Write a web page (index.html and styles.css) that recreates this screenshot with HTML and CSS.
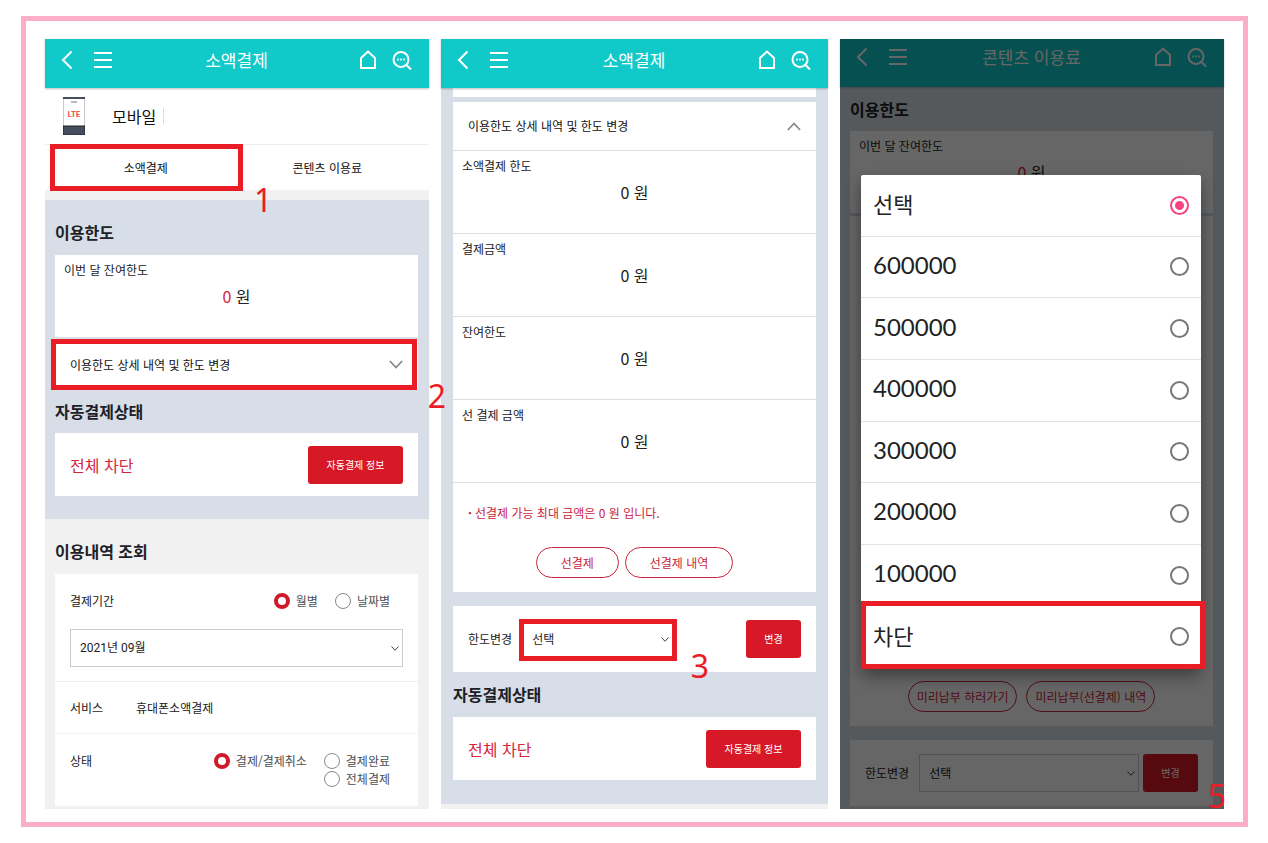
FILE: index.html
```
<!DOCTYPE html>
<html lang="ko">
	<head>
		<meta charset="utf-8">
		<meta name="viewport" content="width=device-width, initial-scale=1">
		<title>소액결제</title>
		<link rel="stylesheet" href="styles.css">
	</head>
	<body>
		<!-- shared icons -->
		<svg class="sprite" aria-hidden="true">
			<symbol id="back" viewBox="0 0 12 20">
				<path d="M10.500 1.500L2 10l8.500 8.500"/>
			</symbol>
			<symbol id="menu" viewBox="0 0 20 20">
				<path d="M1 3h18M1 10h18M1 17h18"/>
			</symbol>
			<symbol id="home" viewBox="0 0 18 20">
				<path d="M2 8l7-6.500L16 8v10H2z"/>
			</symbol>
			<symbol id="search" viewBox="0 0 20 20">
				<circle cx="9" cy="9.500" r="7.500"/>
				<path d="M14.500 15l4.500 4.500"/>
				<path d="M5.200 9.500h1.600M8.200 9.500h1.600M11.200 9.500h1.600"/>
			</symbol>
			<symbol id="down" viewBox="0 0 16 10">
				<path d="M1 1l7 7.500L15 1"/>
			</symbol>
			<symbol id="up" viewBox="0 0 16 10">
				<path d="M1 9l7-7.500L15 9"/>
			</symbol>
		</svg>

		<main class="board">
			<!-- step 1, 2 -->
			<section class="phone">
				<header class="topbar">
					<div class="tools">
						<button class="tool" aria-label="뒤로"><svg class="icon-back"><use href="#back"/></svg></button>
						<button class="tool" aria-label="메뉴"><svg class="icon-menu"><use href="#menu"/></svg></button>
					</div>
					<h1>소액결제</h1>
					<div class="tools right">
						<button class="tool" aria-label="홈"><svg class="icon-home"><use href="#home"/></svg></button>
						<button class="tool" aria-label="검색"><svg class="icon-search"><use href="#search"/></svg></button>
					</div>
				</header>
				<div class="product">
					<svg class="device" viewBox="0 0 22 38">
						<rect x="0.500" y="0.500" width="21" height="37" fill="#fff" stroke="#c8cace"/>
						<path d="M0 1h22" stroke="#454d5e" stroke-width="2"/>
						<path d="M8 5h6" stroke="#777"/>
						<rect y="29" width="22" height="9" fill="#454d5e"/>
						<text x="11" y="20" text-anchor="middle">LTE</text>
					</svg>
					<span class="product-name">모바일</span>
				</div>
				<nav class="tabs">
					<a class="tab mark mark-tab" href="#">소액결제<span class="step step-1">1</span></a>
					<a class="tab" href="#">콘텐츠 이용료</a>
				</nav>
				<div class="area">
					<h2 class="first">이용한도</h2>
					<div class="card amount">
						<span class="label">이번 달 잔여한도</span>
						<p><em>0</em> 원</p>
					</div>
					<button class="accordion closed mark mark-row">
						이용한도 상세 내역 및 한도 변경
						<svg><use href="#down"/></svg>
						<span class="step step-2">2</span>
					</button>
					<h2>자동결제상태</h2>
					<div class="card status">
						<strong>전체 차단</strong>
						<button class="btn wide">자동결제 정보</button>
					</div>
				</div>
				<form class="history">
					<h2 class="first">이용내역 조회</h2>
					<div class="card">
						<div class="period">
							<div class="field">
								<span>결제기간</span>
								<div class="radios">
									<label><input type="radio" name="period" checked>월별</label>
									<label><input type="radio" name="period">날짜별</label>
								</div>
							</div>
							<div class="select month">
								<select aria-label="결제기간"><option>2021년 09월</option></select>
								<svg><use href="#down"/></svg>
							</div>
						</div>
						<div class="service">
							<span>서비스</span>
							<span>휴대폰소액결제</span>
						</div>
						<div class="field state">
							<span>상태</span>
							<div class="radios">
								<label><input type="radio" name="state" checked>결제/결제취소</label>
								<label><input type="radio" name="state">결제완료</label>
								<label><input type="radio" name="state">전체결제</label>
							</div>
						</div>
					</div>
				</form>
			</section>

			<!-- step 3 -->
			<section class="phone detail">
				<header class="topbar">
					<div class="tools">
						<button class="tool" aria-label="뒤로"><svg class="icon-back"><use href="#back"/></svg></button>
						<button class="tool" aria-label="메뉴"><svg class="icon-menu"><use href="#menu"/></svg></button>
					</div>
					<h1>소액결제</h1>
					<div class="tools right">
						<button class="tool" aria-label="홈"><svg class="icon-home"><use href="#home"/></svg></button>
						<button class="tool" aria-label="검색"><svg class="icon-search"><use href="#search"/></svg></button>
					</div>
				</header>
				<div class="area">
					<div class="card scrolled"></div>
					<div class="card">
						<button class="accordion">
							이용한도 상세 내역 및 한도 변경
							<svg><use href="#up"/></svg>
						</button>
						<div class="amount line">
							<span class="label">소액결제 한도</span>
							<p>0 원</p>
						</div>
						<div class="amount line">
							<span class="label">결제금액</span>
							<p>0 원</p>
						</div>
						<div class="amount line">
							<span class="label">잔여한도</span>
							<p>0 원</p>
						</div>
						<div class="amount line">
							<span class="label">선 결제 금액</span>
							<p>0 원</p>
						</div>
						<div class="prepay line">
							<p class="note">선결제 가능 최대 금액은 0 원 입니다.</p>
							<div class="pills">
								<button class="pill">선결제</button>
								<button class="pill">선결제 내역</button>
							</div>
						</div>
					</div>
					<form class="card change">
						<label for="limit">한도변경</label>
						<div class="select short mark mark-select">
							<select id="limit"><option>선택</option></select>
							<svg><use href="#down"/></svg>
							<span class="step step-3">3</span>
						</div>
						<button class="btn" type="button">변경</button>
					</form>
					<h2>자동결제상태</h2>
					<div class="card status">
						<strong>전체 차단</strong>
						<button class="btn wide">자동결제 정보</button>
					</div>
				</div>
			</section>

			<!-- step 5 -->
			<section class="phone contents">
				<header class="topbar">
					<div class="tools">
						<button class="tool" aria-label="뒤로"><svg class="icon-back"><use href="#back"/></svg></button>
						<button class="tool" aria-label="메뉴"><svg class="icon-menu"><use href="#menu"/></svg></button>
					</div>
					<h1>콘텐츠 이용료</h1>
					<div class="tools right">
						<button class="tool" aria-label="홈"><svg class="icon-home"><use href="#home"/></svg></button>
						<button class="tool" aria-label="검색"><svg class="icon-search"><use href="#search"/></svg></button>
					</div>
				</header>
				<div class="area">
					<h2>이용한도</h2>
					<div class="card amount">
						<span class="label">이번 달 잔여한도</span>
						<p><em>0</em> 원</p>
					</div>
					<div class="card rest">
						<div class="pills">
							<button class="pill">미리납부 하러가기</button>
							<button class="pill">미리납부(선결제) 내역</button>
						</div>
					</div>
					<form class="card change">
						<label for="content-limit">한도변경</label>
						<div class="select">
							<select id="content-limit"><option>선택</option></select>
							<svg><use href="#down"/></svg>
						</div>
						<button class="btn" type="button">변경</button>
					</form>
				</div>
				<div class="dim"></div>
				<div class="picker" role="dialog" aria-label="한도변경">
					<label class="option">선택<input type="radio" name="limit" checked></label>
					<label class="option num">600000<input type="radio" name="limit"></label>
					<label class="option num">500000<input type="radio" name="limit"></label>
					<label class="option num">400000<input type="radio" name="limit"></label>
					<label class="option num">300000<input type="radio" name="limit"></label>
					<label class="option num">200000<input type="radio" name="limit"></label>
					<label class="option num">100000<input type="radio" name="limit"></label>
					<label class="option mark mark-option">차단<input type="radio" name="limit"></label>
				</div>
				<span class="step step-5">5</span>
			</section>
		</main>
	</body>
</html>
```

FILE: styles.css
```
* {
	box-sizing: border-box;
}
body {
	margin: 0;
	padding: 16px 20px 16px 21px;
	background: #fff;
	color: #222;
	font-family: "Noto Sans CJK KR", sans-serif;
	font-size: 12px;
	line-height: 18px;
}
h1,
h2,
p {
	margin: 0;
}
button,
select {
	font: inherit;
	color: inherit;
}
button {
	padding: 0;
	border: none;
	background: none;
	cursor: pointer;
}
svg {
	display: block;
	fill: none;
	stroke: currentColor;
}
.sprite {
	display: none;
}
.board {
	display: grid;
	grid-template-columns: 384fr 387fr 384fr;
	gap: 12px;
	padding: 18px 19px 13px;
	border: 5px solid #fbaec8;
}
.phone {
	position: relative;
	display: flex;
	flex-direction: column;
	background: #f1f1f1;
}

/* top bar */
.topbar {
	position: relative;
	display: grid;
	grid-template-columns: 1fr auto 1fr;
	align-items: center;
	height: 49px;
	padding: 0 17px 8px 16px;
	background: #12c9ca;
	box-shadow: 0 1px 2px rgba(0, 0, 0, 0.25);
	color: #fff;
}
.topbar h1 {
	font-size: 17px;
	font-weight: 400;
	line-height: 24px;
}
.tools {
	display: flex;
	align-items: center;
	gap: 20px;
}
.right {
	justify-content: flex-end;
	gap: 15px;
}
.tool svg {
	height: 20px;
	stroke-width: 2;
}
.icon-back {
	width: 12px;
}
.icon-menu,
.icon-search {
	width: 20px;
}
.icon-home {
	width: 18px;
}

/* product and tabs */
.product {
	display: flex;
	align-items: center;
	gap: 27px;
	height: 56px;
	padding: 0 18px;
	background: #fff;
}
.device {
	width: 22px;
	height: 38px;
}
.device text {
	fill: #e8474f;
	stroke: none;
	font: bold 8px Lato, sans-serif;
}
.product-name {
	padding-right: 7px;
	border-right: 1px solid #ddd;
	color: #111;
	font-size: 16px;
	line-height: 16px;
}
.tabs {
	display: grid;
	grid-template-columns: 1fr 1fr;
	padding: 0 11px 0 10px;
	border-top: 1px solid #eee;
	background: #fff;
}
.tab {
	color: #111;
	line-height: 45px;
	text-align: center;
	text-decoration: none;
}

/* sections */
.area {
	margin-top: 10px;
	padding: 0 11px 23px 10px;
	background: #d8dee7;
}
h2 {
	height: 44px;
	color: #1d2026;
	font-size: 16px;
	font-weight: 700;
	line-height: 44px;
}
.first {
	height: 55px;
	padding-top: 10px;
}
.card {
	background: #fff;
}
.amount {
	height: 82px;
	padding: 6px 9px;
}
.amount p {
	margin-top: 5px;
	font-size: 16px;
	line-height: 24px;
	text-align: center;
}
.amount em {
	color: #d5263b;
	font-style: normal;
}
.line {
	border-top: 1px solid #dcdfe2;
}
.line.amount {
	height: 83px;
}
.accordion {
	display: flex;
	align-items: center;
	justify-content: space-between;
	width: 100%;
	height: 48px;
	padding: 0 15px;
	background: #fff;
	color: #111;
}
.closed {
	height: 49px;
	margin-top: 3px;
}
.accordion svg {
	width: 14px;
	height: 9px;
	stroke: #888;
	stroke-width: 2;
}
.status {
	display: flex;
	align-items: center;
	justify-content: space-between;
	height: 63px;
	padding: 0 15px;
}
.status strong {
	color: #d5263b;
	font-size: 16px;
	font-weight: 400;
}
.btn {
	width: 55px;
	height: 38px;
	border-radius: 3px;
	background: #d71826;
	color: #fff;
	font-size: 10px;
}
.wide {
	width: 95px;
}

/* history form */
.history {
	padding: 0 11px 3px 10px;
}
.period {
	padding: 18px 15px 14px;
}
.field {
	display: flex;
	justify-content: space-between;
}
.radios {
	display: flex;
	flex-wrap: wrap;
	justify-content: flex-end;
	column-gap: 17px;
	padding-right: 13px;
	color: #4d4f55;
}
.radios label {
	display: flex;
	align-items: center;
	gap: 6px;
}
.radios input {
	appearance: none;
	width: 16px;
	height: 16px;
	margin: 0;
	border: 1px solid #888;
	border-radius: 50%;
	background: #fff;
}
.radios input:checked {
	border: 4px solid #d01a2b;
}
.select {
	position: relative;
	flex: 1;
}
.select select {
	display: block;
	appearance: none;
	width: 100%;
	height: 38px;
	padding: 0 9px;
	border: 1px solid #ccc;
	border-radius: 0;
	background: #fff;
}
.select svg {
	position: absolute;
	top: 17px;
	right: 4px;
	width: 8px;
	height: 5px;
	stroke: #444;
	stroke-width: 2;
	pointer-events: none;
}
.month {
	margin-top: 19px;
}
.month select {
	font-family: Roboto, "Noto Sans CJK KR", sans-serif;
}
.service {
	display: grid;
	grid-template-columns: 66px 1fr;
	align-items: center;
	height: 52px;
	padding: 0 15px;
	border-top: 1px solid #eee;
}
.state {
	height: 73px;
	padding: 18px 15px 0;
	border-top: 1px solid #f3f3f3;
}
.state .radios {
	flex: 0 0 220px;
	align-content: flex-start;
}

/* second phone */
.detail .area {
	margin: 0;
	padding: 0 12px 24px;
}
.detail h2 {
	height: 45px;
}
.scrolled {
	height: 9px;
	margin-bottom: 5px;
}
.prepay {
	padding: 21px 0 14px;
}
.note {
	padding-left: 15px;
	color: #c8233c;
}
.note::before {
	content: "·";
	padding-right: 3px;
	font-weight: 700;
}
.pills {
	display: flex;
	justify-content: center;
	gap: 6px;
}
.pill {
	height: 31px;
	padding: 0 24px;
	border: 1px solid #c8233c;
	border-radius: 16px;
	background: #fff;
	color: #c8233c;
}
.prepay .pills {
	margin-top: 25px;
}
.change {
	display: flex;
	align-items: center;
	height: 66px;
	margin-top: 14px;
	padding: 0 15px;
}
.change .select {
	margin: 0 4px 0 10px;
}
.change .short {
	max-width: 151px;
}
.change .btn {
	margin-left: auto;
}

/* third phone */
.contents .topbar {
	height: 48px;
	padding-bottom: 12px;
}
.contents .area {
	display: flex;
	flex: 1;
	flex-direction: column;
	margin: 0;
	padding-bottom: 3px;
}
.rest {
	display: flex;
	flex: 1;
	flex-direction: column;
	justify-content: flex-end;
	margin-top: 3px;
	padding-bottom: 14px;
}
.rest .pills {
	gap: 9px;
}
.rest .pill {
	padding: 0 8px;
}
.dim {
	position: absolute;
	inset: 0;
	background: rgba(0, 0, 0, 0.6);
}
.picker {
	position: absolute;
	top: 136px;
	left: 21px;
	right: 23px;
	display: grid;
	grid-template-rows: repeat(8, 1fr);
	height: 493px;
	border-radius: 2px;
	background: #fff;
	box-shadow: 0 8px 16px rgba(0, 0, 0, 0.4);
}
.option {
	display: flex;
	align-items: center;
	justify-content: space-between;
	padding: 0 12px 4px;
	border-bottom: 1px solid #e2e2e2;
	color: #222;
	font-size: 22px;
	line-height: 32px;
}
.num {
	font-family: Lato, sans-serif;
	font-size: 24px;
}
.option input {
	appearance: none;
	width: 19px;
	height: 19px;
	margin: 4px 0 0;
	border: 2px solid #777;
	border-radius: 50%;
}
.option input:checked {
	border-color: #f8437f;
	background: radial-gradient(#f8437f 4px, #fff 5px);
}

/* red guide boxes and step numbers */
.mark {
	position: relative;
}
.mark::after {
	content: "";
	position: absolute;
	border: 5px solid #ea1c26;
	pointer-events: none;
}
.mark-tab::after {
	inset: -1px -6px -1px -5px;
}
.mark-row::after {
	inset: -1px 1px -1px -4px;
}
.mark-select::after {
	inset: -1px -4px -3px -3px;
}
.mark-option::after {
	inset: -5px -4px -2px 0;
}
.step {
	position: absolute;
	z-index: 1;
	color: #ea1c26;
	font-family: "Noto Sans", sans-serif;
	font-size: 32px;
	font-weight: 400;
	line-height: 32px;
}
.step-1 {
	top: 39px;
	left: 199px;
}
.step-2 {
	top: 40px;
	right: -28px;
}
.step-3 {
	top: 30px;
	right: -36px;
}
.step-5 {
	right: -2px;
	bottom: -3px;
}
```
